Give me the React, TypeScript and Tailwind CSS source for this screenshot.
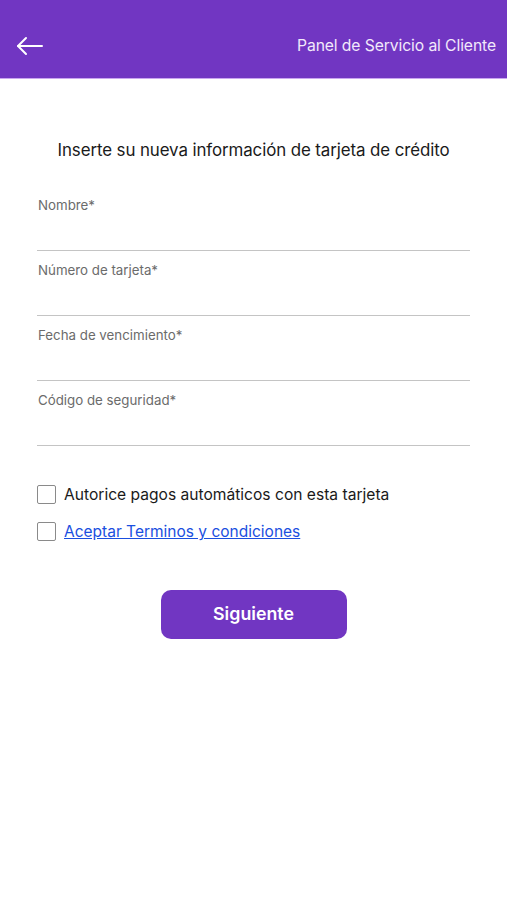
import React from 'react';

const fields = ['Nombre*', 'Número de tarjeta*', 'Fecha de vencimiento*', 'Código de seguridad*'];

const App: React.FC = () => {
  return (
    <div className="min-h-[900px] bg-white" style={{ fontFamily: 'Inter, "Noto Sans", sans-serif' }}>
      {/* Header */}
      <header className="h-[79px] bg-[#7136c2] border-b border-[#c9a6f0] flex items-center justify-between pt-[14px] pl-[16px] pr-[11px]">
        <svg width="28" height="20" viewBox="0 0 28 20" fill="none" stroke="#ffffff" strokeWidth="2" strokeLinecap="round" strokeLinejoin="round">
          <path d="M26 10H2" />
          <path d="M10 2L2 10L10 18" />
        </svg>
        <span className="text-[15.7px] text-[#f1e9fb] tracking-[-0.1px]">Panel de Servicio al Cliente</span>
      </header>

      <main className="px-[37px]">
        <h1 className="mt-[59px] text-center text-[16.9px] leading-[24px] text-[#1a1a1a] tracking-[-0.1px]">
          Inserte su nueva información de tarjeta de crédito
        </h1>

        <div className="mt-[24px] flex flex-col">
          {fields.map((f) => (
            <div key={f} className="flex flex-col pt-[12px]">
              <label className="pl-[1px] text-[13.3px] leading-[14px] text-[#6b6b6b]">{f}</label>
              <div className="h-[39px] border-b border-[#c4c4c4]" />
            </div>
          ))}
        </div>

        <div className="mt-[39px] flex flex-col gap-[18px]">
          <label className="flex items-center gap-[8px]">
            <span className="w-[19px] h-[19px] border border-[#8a8a8a] rounded-[2px] bg-white" />
            <span className="text-[15.6px] leading-[19px] text-[#1a1a1a]">Autorice pagos automáticos con esta tarjeta</span>
          </label>
          <label className="flex items-center gap-[8px]">
            <span className="w-[19px] h-[19px] border border-[#8a8a8a] rounded-[2px] bg-white" />
            <a href="#" className="text-[15.5px] leading-[19px] text-[#1a4fe0] underline">Aceptar Terminos y condiciones</a>
          </label>
        </div>

        <div className="mt-[49px] flex justify-center">
          <button className="w-[186px] h-[49px] rounded-[10px] bg-[#7136c2] text-white text-[17.8px] font-semibold">
            Siguiente
          </button>
        </div>
      </main>
    </div>
  );
};

export default App;
